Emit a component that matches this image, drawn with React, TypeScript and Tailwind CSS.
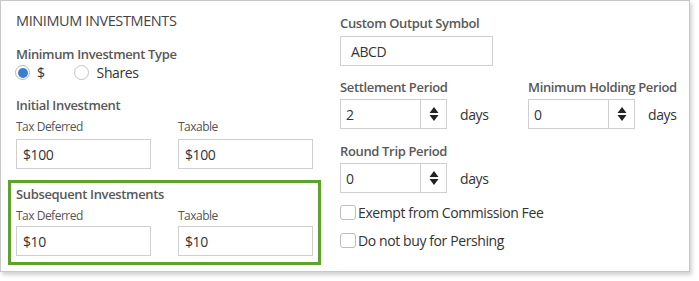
import React from "react";

const font = { fontFamily: '"Open Sans", "Liberation Sans", sans-serif' };

function TextBox({ value, className }: { value: string; className: string }) {
  return (
    <div className={`flex items-center border border-[#cfcfcf] bg-white pl-[6px] text-[14px] tracking-[-0.4px] text-[#333] ${className}`}>
      {value}
    </div>
  );
}

function Spinner({ value }: { value: string }) {
  return (
    <div className="flex h-[30px] w-[107px] border border-[#cfcfcf] bg-white">
      <div className="flex flex-1 items-center pl-[5px] text-[14px] text-[#333]">{value}</div>
      <div className="flex w-[26px] items-center justify-center border-l border-[#cfcfcf]">
        <svg width="10" height="16" viewBox="0 0 10 16">
          <path d="M5 1 L9.5 7 L0.5 7 Z" fill="#222" />
          <path d="M5 15 L9.5 9 L0.5 9 Z" fill="#222" />
        </svg>
      </div>
    </div>
  );
}

function Label({ children, className = "" }: { children: React.ReactNode; className?: string }) {
  return (
    <div className={`text-[13px] font-semibold leading-[18px] tracking-[-0.35px] text-[#585858] ${className}`}>
      {children}
    </div>
  );
}

function Small({ children }: { children: React.ReactNode }) {
  return <div className="text-[12px] leading-[16px] tracking-[-0.5px] text-[#555]">{children}</div>;
}

function Days() {
  return <span className="ml-[13px] text-[14px] tracking-[-0.4px] text-[#333]">days</span>;
}

function Check({ label }: { label: string }) {
  return (
    <div className="flex h-[16px] items-center">
      <div className="h-[15px] w-[16px] rounded-[3px] border border-[#bdbdbd] bg-white" />
      <span className="ml-[2px] text-[14px] tracking-[-0.4px] text-[#333]">{label}</span>
    </div>
  );
}

export default function App() {
  return (
    <div className="h-[281px] w-[699px] bg-white" style={font}>
      <div className="flex h-[272px] w-[690px] border border-[#c8c8c8] bg-white shadow-[2px_3px_4px_rgba(0,0,0,0.18)]">
        {/* left column */}
        <div className="ml-[7px] mt-[10px] w-[313px]">
          <div className="ml-[8px] text-[14.5px] leading-[20px] tracking-[-0.4px] text-[#444]">MINIMUM INVESTMENTS</div>
          <Label className="ml-[8px] mt-[14px]">Minimum Investment Type</Label>
          <div className="ml-[7px] mt-[1px] flex h-[17px] items-center text-[14px] tracking-[-0.4px] text-[#333]">
            <div className="flex h-[15px] w-[15px] items-center justify-center rounded-full border border-[#b8b8b8]">
              <div className="h-[10px] w-[10px] rounded-full bg-[#3a7fd1]" />
            </div>
            <span className="ml-[7px]">$</span>
            <div className="ml-[29px] h-[15px] w-[15px] rounded-full border border-[#c4c4c4]" />
            <span className="ml-[8px]">Shares</span>
          </div>
          <Label className="ml-[8px] mt-[15px]">Initial Investment</Label>
          <div className="ml-[8px] mt-[5px] flex gap-[27px]">
            <div>
              <Small>Tax Deferred</Small>
              <TextBox value="$100" className="mt-[4px] h-[30px] w-[135px]" />
            </div>
            <div>
              <Small>Taxable</Small>
              <TextBox value="$100" className="mt-[4px] h-[30px] w-[135px]" />
            </div>
          </div>
          <div className="mt-[11px] h-[85px] border-[3px] border-[#5ea22d] pl-[5px] pt-[2px]">
            <Label>Subsequent Investments</Label>
            <div className="mt-[5px] flex gap-[27px]">
              <div>
                <Small>Tax Deferred</Small>
                <TextBox value="$10" className="mt-[2px] h-[30px] w-[135px]" />
              </div>
              <div>
                <Small>Taxable</Small>
                <TextBox value="$10" className="mt-[2px] h-[30px] w-[135px]" />
              </div>
            </div>
          </div>
        </div>

        {/* right column */}
        <div className="ml-[19px] mt-[13px] flex-1">
          <Label>Custom Output Symbol</Label>
          <TextBox value="ABCD" className="mt-[4px] h-[30px] w-[153px] pl-[10px]" />
          <div className="mt-[12px] flex">
            <div className="w-[188px]">
              <Label>Settlement Period</Label>
              <div className="mt-[3px] flex items-center">
                <Spinner value="2" />
                <Days />
              </div>
            </div>
            <div>
              <Label>Minimum Holding Period</Label>
              <div className="mt-[3px] flex items-center">
                <Spinner value="0" />
                <Days />
              </div>
            </div>
          </div>
          <Label className="mt-[13px]">Round Trip Period</Label>
          <div className="mt-[3px] flex items-center">
            <Spinner value="0" />
            <Days />
          </div>
          <div className="mt-[11px]">
            <Check label="Exempt from Commission Fee" />
          </div>
          <div className="mt-[12px]">
            <Check label="Do not buy for Pershing" />
          </div>
        </div>
      </div>
    </div>
  );
}
